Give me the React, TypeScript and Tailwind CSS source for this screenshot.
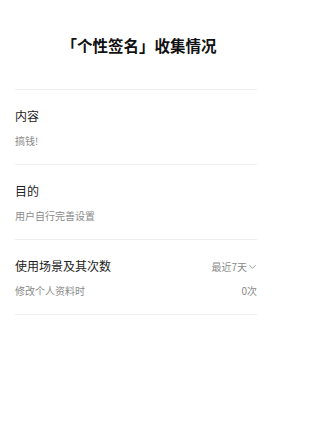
import React from 'react';

const font = { fontFamily: '"Noto Sans CJK SC", "Noto Sans", sans-serif' };

function Section({ label, sub, right, subRight }: { label: string; sub: string; right?: React.ReactNode; subRight?: string }) {
  return (
    <div className="border-b border-[#efefef] pt-[17px] pb-[16px]">
      <div className="flex items-center justify-between">
        <span className="text-[12px] leading-[18px] text-[#222]">{label}</span>
        {right}
      </div>
      <div className="mt-[9px] flex items-center justify-between text-[10px] leading-[14px] text-[#8a8a8a]">
        <span>{sub}</span>
        {subRight && <span>{subRight}</span>}
      </div>
    </div>
  );
}

export default function App() {
  return (
    <div className="min-h-[425px] w-[264px] bg-white pl-[15px] pr-[7px]" style={font}>
      <div className="flex h-[90px] items-center justify-center border-b border-[#efefef] pl-[6px]">
        <h1 className="text-[15.5px] font-bold leading-[20px] text-[#111]">「个性签名」收集情况</h1>
      </div>
      <Section label="内容" sub="搞钱!" />
      <Section label="目的" sub="用户自行完善设置" />
      <Section
        label="使用场景及其次数"
        sub="修改个人资料时"
        subRight="0次"
        right={
          <span className="flex items-center text-[10px] text-[#8a8a8a]">
            最近7天
            <svg width="9" height="9" viewBox="0 0 10 10" className="ml-[1px]">
              <path d="M1.5 3.5 L5 7 L8.5 3.5" fill="none" stroke="#8a8a8a" strokeWidth="0.9" />
            </svg>
          </span>
        }
      />
    </div>
  );
}
